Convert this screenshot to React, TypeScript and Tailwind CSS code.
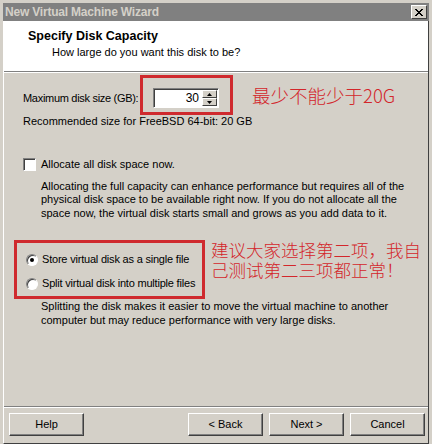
import React from "react";

const ui = "font-['Tahoma','Liberation_Sans',sans-serif] text-[11px] text-black whitespace-nowrap";
const cjk = "font-['Noto_Sans_CJK_SC',sans-serif] font-light text-[17.5px] text-[#d3262b] leading-[20px]";
const btn =
  "w-[75px] h-[23px] bg-[#d4d0c8] border border-t-white border-l-white border-r-[#404040] border-b-[#404040] shadow-[inset_-1px_-1px_0_#808080] flex items-center justify-center";

function Radio({ checked }: { checked?: boolean }) {
  return (
    <span className="w-[12px] h-[12px] rounded-full bg-white border border-t-[#808080] border-l-[#808080] border-r-white border-b-white shadow-[inset_1px_1px_0_#404040] flex items-center justify-center shrink-0">
      {checked && <span className="w-[4px] h-[4px] rounded-full bg-black" />}
    </span>
  );
}

export default function App() {
  return (
    <div className={`w-[432px] h-[444px] bg-[#d4d0c8] pt-[3px] px-[3px] flex flex-col ${ui}`}>
      {/* title bar */}
      <div className="h-[18px] bg-[#808080] flex items-center justify-between pl-[2px] pr-[2px]">
        <span className="font-bold text-[#d4d0c8] text-[12px] tracking-[-0.2px]">New Virtual Machine Wizard</span>
        <div className="w-[16px] h-[14px] bg-[#d4d0c8] border border-t-white border-l-white border-r-[#404040] border-b-[#404040] flex items-center justify-center">
          <svg width="8" height="7" viewBox="0 0 8 7">
            <path d="M0 0 L7 7 M1 0 L8 7 M7 0 L0 7 M8 0 L1 7" stroke="black" strokeWidth="1" />
          </svg>
        </div>
      </div>

      <div className="flex-1 flex flex-col border-l border-l-white border-r border-r-[#404040] border-b border-b-[#404040]">
        {/* header */}
        <div className="h-[51px] bg-white border-b border-b-[#808080] pl-[24px] pt-[8px]">
          <div className="font-bold text-[12.5px] leading-[14px]">Specify Disk Capacity</div>
          <div className="pl-[24px] mt-[2px] leading-[14px]">How large do you want this disk to be?</div>
        </div>

        {/* body */}
        <div className="flex-1 border-t border-t-white pl-[19px] pt-[2px]">
          <div className="flex items-start h-[40px]">
            <span className="w-[117px] shrink-0 mt-[17px] leading-[13px] tracking-[-0.3px]">Maximum disk size (GB):</span>
            <div className="w-[93px] h-[40px] shrink-0 border-[3px] border-[#cf2a2e] pt-[10px] pl-[10px]">
              <div className="w-[66px] h-[20px] bg-white border border-t-[#808080] border-l-[#808080] border-r-white border-b-white shadow-[inset_1px_1px_0_#404040] flex items-center">
                <span className="flex-1 text-right pr-[3px] text-[12px]">30</span>
                <div className="flex flex-col h-[16px] w-[15px] mr-[1px]">
                  <div className="flex-1 bg-[#d4d0c8] border border-t-white border-l-white border-r-[#404040] border-b-[#404040] flex items-center justify-center">
                    <svg width="5" height="3" viewBox="0 0 5 3"><path d="M2.5 0 L5 3 L0 3Z" fill="black" /></svg>
                  </div>
                  <div className="flex-1 bg-[#d4d0c8] border border-t-white border-l-white border-r-[#404040] border-b-[#404040] flex items-center justify-center">
                    <svg width="5" height="3" viewBox="0 0 5 3"><path d="M0 0 L5 0 L2.5 3Z" fill="black" /></svg>
                  </div>
                </div>
              </div>
            </div>
            <span className={`${cjk} ml-[19px] mt-[10px] text-[18.5px]`}>最少不能少于20G</span>
          </div>

          <div className="leading-[13px]">Recommended size for FreeBSD 64-bit: 20 GB</div>

          <div className="flex items-center gap-[5px] mt-[28px]">
            <span className="w-[13px] h-[13px] bg-white border border-t-[#808080] border-l-[#808080] border-r-white border-b-white shadow-[inset_1px_1px_0_#404040]" />
            <span>Allocate all disk space now.</span>
          </div>

          <div className="pl-[18px] mt-[7px] leading-[13.5px]">
            Allocating the full capacity can enhance performance but requires all of the
            <br />
            physical disk space to be available right now. If you do not allocate all the
            <br />
            space now, the virtual disk starts small and grows as you add data to it.
          </div>

          <div className="flex items-start mt-[20px] -ml-[9px]">
            <div className="w-[191px] h-[59px] border-[3px] border-[#cf2a2e] pl-[9px] pt-[10px] flex flex-col gap-[11px] tracking-[-0.2px]">
              <div className="flex items-center gap-[4px] h-[13px]">
                <Radio checked />
                <span>Store virtual disk as a single file</span>
              </div>
              <div className="flex items-center gap-[4px] h-[13px]">
                <Radio />
                <span>Split virtual disk into multiple files</span>
              </div>
            </div>
            <div className={`${cjk} ml-[6px] flex flex-col`}>
              <span>建议大家选择第二项，我自</span>
              <span>己测试第二三项都正常！</span>
            </div>
          </div>

          <div className="pl-[18px] mt-[1px] leading-[13.5px]">
            Splitting the disk makes it easier to move the virtual machine to another
            <br />
            computer but may reduce performance with very large disks.
          </div>
        </div>

        {/* footer */}
        <div className="h-[37px] border-t border-t-[#808080] shadow-[inset_0_1px_0_white] flex items-start pt-[6px] pl-[5px]">
          <div className={btn}>Help</div>
          <div className="flex-1" />
          <div className="flex gap-[6px] pr-[3px]">
            <div className={btn}>&lt; Back</div>
            <div className={btn}>Next &gt;</div>
            <div className={btn}>Cancel</div>
          </div>
        </div>
      </div>
    </div>
  );
}
